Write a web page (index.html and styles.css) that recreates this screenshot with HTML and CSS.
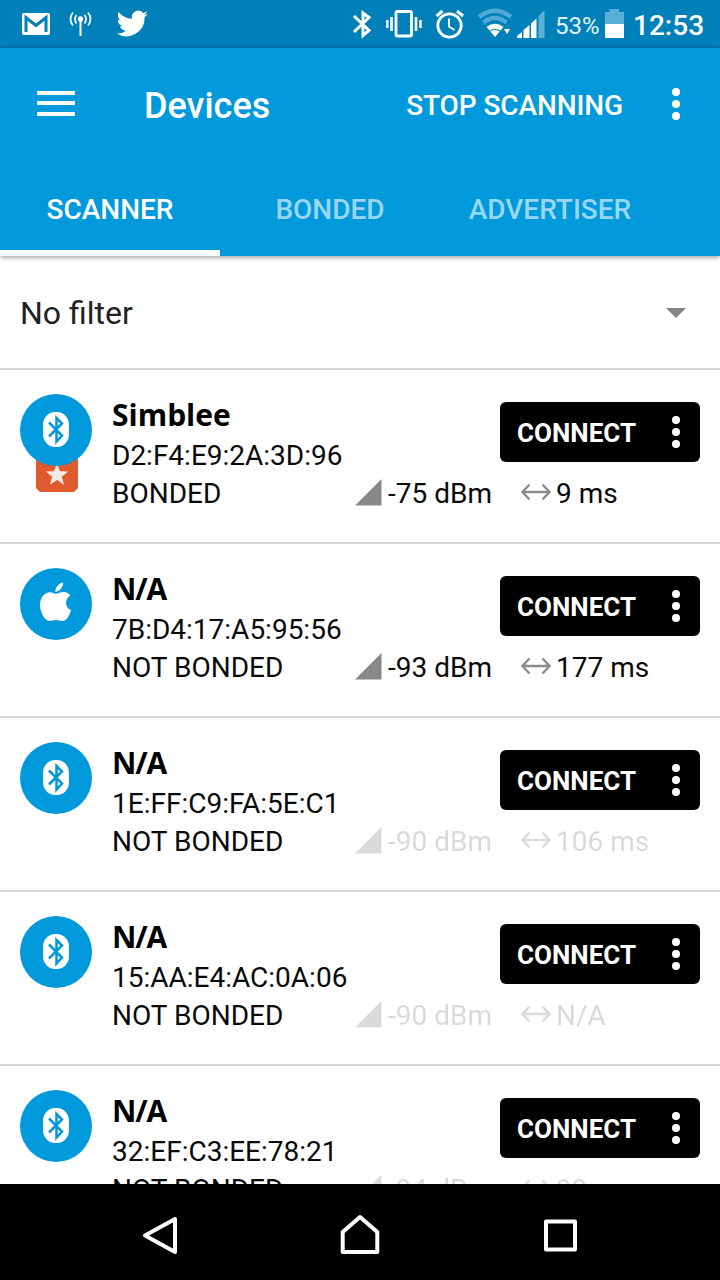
FILE: index.html
```html
<!DOCTYPE html>
<html lang="en">
<head>
<meta charset="utf-8">
<title>Devices</title>
<link rel="stylesheet" href="styles.css">
</head>
<body>
<svg class="defs" width="0" height="0">
  <symbol id="bt" viewBox="0 0 72 72">
    <rect x="23" y="18" width="26" height="35" rx="12" ry="13" fill="#fff"/>
    <path d="M29 28.500 42 41.500 36.500 47.500V24L42 29.500 29 42.500" fill="none" stroke="#0099dc" stroke-width="2.500"/>
  </symbol>
  <symbol id="apple" viewBox="0 0 72 72">
    <path d="M43 14.500c.3 5-3.500 9.200-7.700 9.200C35.200 19.500 39 15 43 14.500zM35.500 25.800c2 0 4.500-1.800 8.300-1.800 2.800 0 5 1.300 6.500 3.400-6.200 3.800-5.300 12.400.7 14.500C49.500 48 46 53 42.500 53c-2.500 0-3.800-1-6.500-1s-4.200 1-6.500 1C25 53 20 44.500 20 37c0-8 5-12.800 9.800-12.800 2.700 0 4.200 1.600 5.700 1.600z" fill="#fff"/>
  </symbol>
  <symbol id="sig" viewBox="0 0 27 27"><path d="M0 26.500 26.500 0V26.500z" fill="#888"/></symbol>
  <symbol id="arrows" viewBox="0 0 30 18"><path d="M2 9H28M8.500 1.500 1.500 9l7 7.500M21.500 1.500l7 7.500-7 7.500" fill="none" stroke="#8c8c8c" stroke-width="2.400"/></symbol>
  <symbol id="dots" viewBox="0 0 8 32"><g fill="#fff"><circle cx="4" cy="4" r="4"/><circle cx="4" cy="16" r="4"/><circle cx="4" cy="28" r="4"/></g></symbol>
</svg>
<div class="screen">
  <header class="status-bar">
    <svg width="720" height="48" viewBox="0 0 720 48">
      <rect x="22" y="13" width="28" height="22" rx="2" fill="#fff"/>
      <path d="M26 32V17.500L36 25.500 46 17.500V32" fill="none" stroke="#0080b9" stroke-width="3"/>
      <g fill="none" stroke="#fff" stroke-width="1.700">
        <path d="M80.500 20V36" stroke-width="2"/>
        <path d="M76.500 15q-3 4 0 8.500M84.500 15q3 4 0 8.500M73 12.500q-5 6.500 0 13M88 12.500q5 6.500 0 13"/>
      </g>
      <circle cx="80.500" cy="19" r="2.700" fill="#fff"/>
      <path transform="translate(116.500 7.800) scale(1.310)" d="M24 4.600a10 10 0 0 1-2.800.8 5 5 0 0 0 2.200-2.700 10 10 0 0 1-3.100 1.200 4.900 4.900 0 0 0-8.400 4.500A14 14 0 0 1 1.700 3.200a4.900 4.900 0 0 0 1.500 6.500 5 5 0 0 1-2.200-.6 4.900 4.900 0 0 0 3.900 4.900 5 5 0 0 1-2.200.1 4.900 4.900 0 0 0 4.600 3.400A9.900 9.900 0 0 1 0 19.500a14 14 0 0 0 21.500-12.400A10 10 0 0 0 24 4.600z" fill="#fff"/>
      <path d="M354 16 369 30.500 363 35.500V13L369 17.500 354 32" fill="none" stroke="#fff" stroke-width="3"/>
      <g fill="none" stroke="#fff">
        <rect x="396" y="11.500" width="15.500" height="24.500" rx="1.500" stroke-width="2.800"/>
        <path d="M391.500 17V31M416 17V31" stroke-width="2.600"/>
        <path d="M387.300 20V28M420.500 20V28" stroke-width="2.400"/>
        <circle cx="449.500" cy="25.500" r="11.700" stroke-width="2.800"/>
        <path d="M449 18.500V26.500L454.500 30" stroke-width="2"/>
        <path d="M436.500 16 442.500 11M457 11 463 16" stroke-width="3"/>
      </g>
      <g fill="none" stroke="#4eaad4" stroke-width="4.200">
        <path d="M479 17Q495 4.500 511 17"/>
        <path d="M483.500 22.500Q495 13.500 506.500 22.500"/>
      </g>
      <path d="M486.500 27Q495 20.500 503.500 27L495 37z" fill="#fff"/>
      <path d="M489 31.500Q495 27.500 501 31.500" fill="none" stroke="#0080b9" stroke-width="1.200"/>
      <path d="M504 29H510L507 34z" fill="#fff"/>
      <g fill="#fff"><path d="M517 38v-2l5-4v6zM523.500 38v-8l6-5v13zM531 38V23.500l5.500-5V38z"/></g>
      <path d="M538.500 38V16l6-6V38z" fill="#59afd6"/>
      <path d="M605 24V12h4.500V9h9.500v3h5v12z" fill="#59afd6"/>
      <path d="M605 24h19v14h-19z" fill="#fff"/>
      <text class="battery-text" x="555" y="33.500">53%</text>
      <text class="clock" x="633" y="34.500">12:53</text>
    </svg>
  </header>
  <div class="top">
    <div class="app-bar">
      <div class="burger"><i></i><i></i><i></i></div>
      <h1>Devices</h1>
      <span class="stop">STOP SCANNING</span>
      <svg class="dots" width="8" height="32"><use href="#dots"/></svg>
    </div>
    <nav class="tabs">
      <span class="tab active">SCANNER</span>
      <span class="tab bonded">BONDED</span>
      <span class="tab advertiser">ADVERTISER</span>
    </nav>
  </div>
  <div class="filter"><span>No filter</span><svg width="20" height="10" viewBox="0 0 20 10"><path d="M0 0H20L10 10z" fill="#858585"/></svg></div>
  <main class="list">
    <section class="device">
      <div class="avatar"><svg class="badge" width="42" height="34" viewBox="0 0 42 34"><path d="M0 0H42V30L38 34H4L0 30z" fill="#df5a2d"/><path d="M21 5.500l3 7.800 8.300.3-6.500 5.100 2.300 8-7.100-4.600-7 4.600 2.200-8-6.500-5.100 8.300-.3z" fill="#f2ece9"/></svg><svg class="face" width="72" height="72"><use href="#bt"/></svg></div>
      <div class="info">
        <div class="head"><div><h2>Simblee</h2><p class="mac">D2:F4:E9:2A:3D:96</p></div><button class="connect"><span>CONNECT</span><svg width="8" height="32"><use href="#dots"/></svg></button></div>
        <div class="meta"><span class="bond">BONDED</span><span class="rssi"><svg width="27" height="27"><use href="#sig"/></svg>-75 dBm</span><span class="interval"><svg width="30" height="18"><use href="#arrows"/></svg>9 ms</span></div>
      </div>
    </section>
    <section class="device">
      <div class="avatar"><svg class="face" width="72" height="72"><use href="#apple"/></svg></div>
      <div class="info">
        <div class="head"><div><h2 class="unnamed">N/A</h2><p class="mac">7B:D4:17:A5:95:56</p></div><button class="connect"><span>CONNECT</span><svg width="8" height="32"><use href="#dots"/></svg></button></div>
        <div class="meta"><span class="bond">NOT BONDED</span><span class="rssi"><svg width="27" height="27"><use href="#sig"/></svg>-93 dBm</span><span class="interval"><svg width="30" height="18"><use href="#arrows"/></svg>177 ms</span></div>
      </div>
    </section>
    <section class="device stale">
      <div class="avatar"><svg class="face" width="72" height="72"><use href="#bt"/></svg></div>
      <div class="info">
        <div class="head"><div><h2 class="unnamed">N/A</h2><p class="mac">1E:FF:C9:FA:5E:C1</p></div><button class="connect"><span>CONNECT</span><svg width="8" height="32"><use href="#dots"/></svg></button></div>
        <div class="meta"><span class="bond">NOT BONDED</span><span class="rssi"><svg width="27" height="27"><use href="#sig"/></svg>-90 dBm</span><span class="interval"><svg width="30" height="18"><use href="#arrows"/></svg>106 ms</span></div>
      </div>
    </section>
    <section class="device stale">
      <div class="avatar"><svg class="face" width="72" height="72"><use href="#bt"/></svg></div>
      <div class="info">
        <div class="head"><div><h2 class="unnamed">N/A</h2><p class="mac">15:AA:E4:AC:0A:06</p></div><button class="connect"><span>CONNECT</span><svg width="8" height="32"><use href="#dots"/></svg></button></div>
        <div class="meta"><span class="bond">NOT BONDED</span><span class="rssi"><svg width="27" height="27"><use href="#sig"/></svg>-90 dBm</span><span class="interval"><svg width="30" height="18"><use href="#arrows"/></svg>N/A</span></div>
      </div>
    </section>
    <section class="device stale">
      <div class="avatar"><svg class="face" width="72" height="72"><use href="#bt"/></svg></div>
      <div class="info">
        <div class="head"><div><h2 class="unnamed">N/A</h2><p class="mac">32:EF:C3:EE:78:21</p></div><button class="connect"><span>CONNECT</span><svg width="8" height="32"><use href="#dots"/></svg></button></div>
        <div class="meta"><span class="bond">NOT BONDED</span><span class="rssi"><svg width="27" height="27"><use href="#sig"/></svg>-94 dBm</span><span class="interval"><svg width="30" height="18"><use href="#arrows"/></svg>99 ms</span></div>
      </div>
    </section>
  </main>
  <footer class="nav-bar">
    <svg width="40" height="44" viewBox="0 0 40 44"><path d="M5 22.500 35 6V39z"/></svg>
    <svg width="40" height="44" viewBox="0 0 40 44"><path d="M2.700 39V19L20 4 37.300 19V39z"/></svg>
    <svg width="40" height="44" viewBox="0 0 40 44"><path d="M6 8.500H35V36.500H6z"/></svg>
  </footer>
</div>
</body>
</html>
```
FILE: styles.css
```css
* { box-sizing: border-box; }
body, h1, h2, p { margin: 0; }
body { font-family: Roboto, "Liberation Sans", sans-serif; background: #fff; color: #0a0a0a; }
.defs { position: absolute; }
.screen { width: 720px; height: 1280px; overflow: hidden; display: flex; flex-direction: column; }
.status-bar { height: 48px; flex: none; background: #0080b9; }
.status-bar svg { display: block; }
.battery-text { font-size: 24px; fill: #e4f3fa; }
.clock { font-size: 28px; font-weight: 500; fill: #fff; }
.top { height: 208px; flex: none; background: #0099dc; box-shadow: 0 1px 5px rgba(0, 0, 0, .45); z-index: 1; }
.app-bar { height: 112px; display: flex; align-items: center; padding: 0 40px 0 37px; color: #fff; }
.burger { display: flex; flex-direction: column; gap: 6.500px; width: 38px; margin-top: -2px; }
.burger i { height: 4px; background: #fff; }
.app-bar h1 { font-size: 36px; line-height: 48px; font-weight: 500; margin-left: 69px; margin-top: 4px; }
.stop { font-size: 28px; font-weight: 500; letter-spacing: -.1px; margin-left: auto; margin-right: 49px; margin-top: 2px; }
.tabs { height: 96px; display: flex; font-size: 28px; font-weight: 500; line-height: 100px; text-align: center; color: #99d6f1; }
.tab { width: 220px; }
.tab.active { color: #fff; border-bottom: 6px solid #fff; }
.filter { height: 114px; flex: none; border-bottom: 2px solid #d6d6d6; padding: 2px 34px 0 20px; display: flex; align-items: center; justify-content: space-between; font-size: 32px; color: #212121; }
.list { flex: 1; min-height: 0; overflow: hidden; }
.device { height: 174px; border-bottom: 2px solid #d6d6d6; padding: 24px 20px 0; display: flex; gap: 20px; }
.avatar { position: relative; width: 72px; height: 72px; flex: none; }
.face { position: relative; display: block; border-radius: 50%; background: #0099dc; }
.badge { position: absolute; left: 16px; top: 64px; }
.info { flex: 1; padding-top: 1px; }
.head { display: flex; justify-content: space-between; height: 80px; }
h2 { font: 700 30px/40px "Open Sans", sans-serif; color: #000; }
.unnamed { letter-spacing: -1.200px; }
.mac { padding-top: 2px; }
.mac, .meta { font-size: 28px; line-height: 38px; }
.connect { width: 200px; height: 60px; margin-top: 7px; border: 0; border-radius: 6px; background: #000; color: #fff; font: 700 26px/58px Roboto, sans-serif; padding: 0 20px 0 17px; display: flex; justify-content: space-between; align-items: center; }
.connect span { padding-top: 2px; }
.meta { display: grid; grid-template-columns: 243px 166px 1fr; }
.rssi, .interval { display: flex; align-items: center; gap: 6px; white-space: nowrap; }
.interval { gap: 5px; }
.rssi svg { margin-top: -4px; }
.interval svg { margin-top: -5px; }
.stale .rssi, .stale .interval { opacity: .15; }
.stale .rssi svg, .stale .interval svg { filter: brightness(.1); }
.nav-bar { height: 96px; flex: none; background: #000; display: flex; justify-content: center; align-items: center; gap: 160px; padding-top: 6px; }
.nav-bar path { fill: none; stroke: #fff; stroke-width: 4; stroke-linejoin: round; }
```
